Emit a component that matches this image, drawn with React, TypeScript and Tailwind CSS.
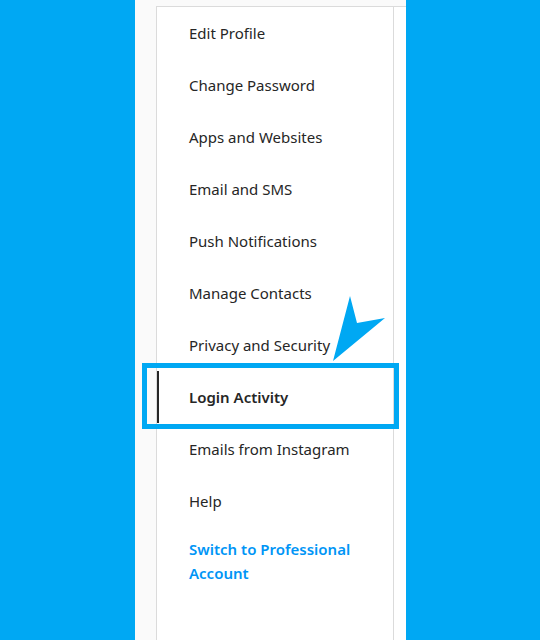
import React from 'react';

const items = [
  'Edit Profile',
  'Change Password',
  'Apps and Websites',
  'Email and SMS',
  'Push Notifications',
  'Manage Contacts',
  'Privacy and Security',
  'Login Activity',
  'Emails from Instagram',
  'Help',
];

const ACTIVE = 'Login Activity';

export default function App() {
  return (
    <div className="relative flex w-[540px] h-[640px] overflow-hidden bg-[#00a8f3] font-['Noto_Sans',sans-serif]">
      <div className="ml-[135px] w-[271px] h-full flex flex-col bg-[#fafafa] pt-[6px] pl-[21px]">
        <div className="flex flex-1 bg-white border-l border-t border-[#dbdbdb]">
          <ul className="w-[237px] border-r border-[#dbdbdb]">
            {items.map((label) => {
              const active = label === ACTIVE;
              return (
                <li key={label}>
                  <a
                    className={`flex items-center h-[52px] pl-[30px] pr-4 border-l-2 text-[15px] text-[#262626] ${
                      active ? 'border-[#262626] font-semibold' : 'border-transparent'
                    }`}
                  >
                    {label}
                  </a>
                </li>
              );
            })}
            <li>
              <a className="block pt-[10px] pb-4 pl-[32px] pr-4 text-[15px] leading-[24px] font-semibold text-[#0095f6]">
                Switch to Professional Account
              </a>
            </li>
          </ul>
          <div className="flex-1 bg-white" />
        </div>
      </div>

      {/* highlight box */}
      <div className="absolute left-[142px] top-[363px] w-[257px] h-[66px] border-[5px] border-[#00a8f3]" />

      {/* pointer arrow */}
      <svg className="absolute left-0 top-0" width="540" height="640" viewBox="0 0 540 640">
        <polygon points="350,296 357,323 385,318 333,361" fill="#00a8f3" />
      </svg>
    </div>
  );
}
